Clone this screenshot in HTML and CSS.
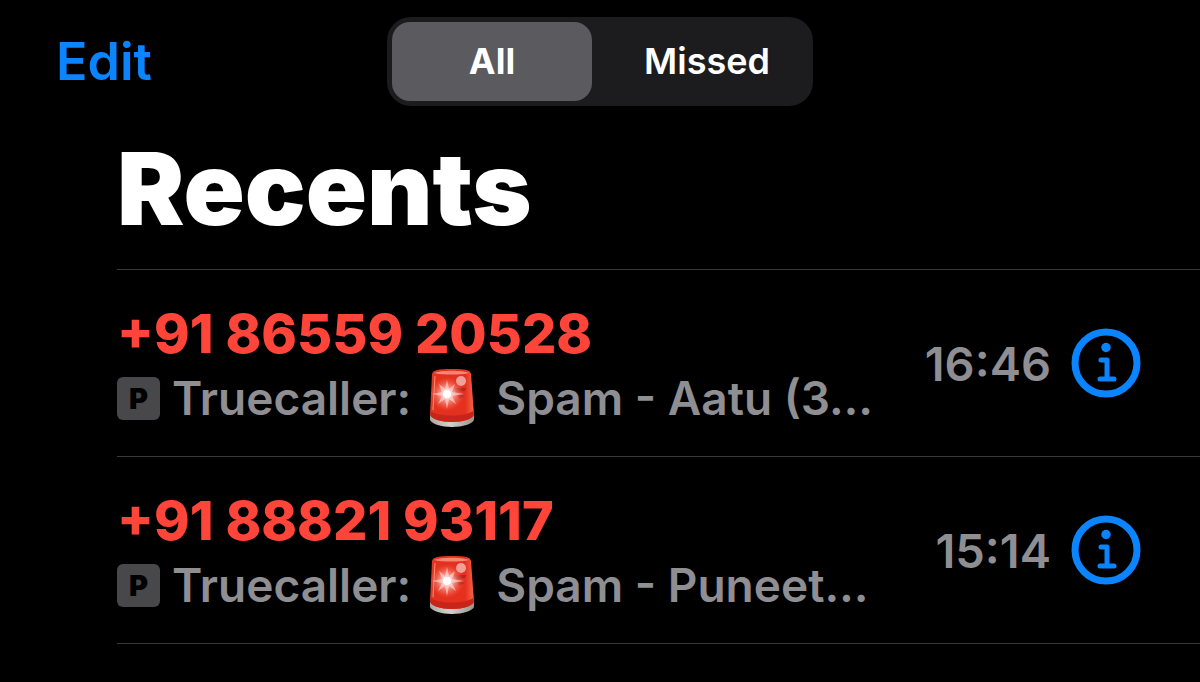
FILE: index.html
```
<!DOCTYPE html>
<html lang="en">

<head>
    <meta charset="utf-8" />
    <meta name="viewport" content="width=device-width, initial-scale=1">
    <title>Recents</title>
    <link rel="stylesheet" href="styles.css">
</head>

<body>
    <!-- shared icons -->
    <svg class="sprite" aria-hidden="true">
        <defs>
            <linearGradient id="glass" x1="0" x2="1" y1="0" y2="0">
                <stop offset="0" stop-color="#d93f2c" />
                <stop offset="0.15" stop-color="#e3301f" />
                <stop offset="0.8" stop-color="#e5301f" />
                <stop offset="1" stop-color="#f4654a" />
            </linearGradient>
            <linearGradient id="base" x1="0" x2="1" y1="0" y2="0">
                <stop offset="0" stop-color="#aaa8a0" />
                <stop offset="0.45" stop-color="#d2d2cc" />
                <stop offset="1" stop-color="#96958e" />
            </linearGradient>
            <radialGradient id="glow">
                <stop offset="0" stop-color="#fff" />
                <stop offset="0.3" stop-color="#ffc4bd" stop-opacity="0.85" />
                <stop offset="1" stop-color="#ff6a50" stop-opacity="0" />
            </radialGradient>
            <symbol id="siren" viewBox="0 0 44 58">
                <path d="M0 46V51C2 55 11 58 22 58S42 55 44 51V46Z" fill="url(#base)" />
                <path d="M2 5C3 1 8 0 22 0S40 1 41 5L44 46C42 50 34 53 22 53S2 50 0 46Z" fill="url(#glass)" />
                <path d="M1 42C8 48 35 48 43 42L44 46C42 50 34 53 22 53S2 50 0 46Z" fill="#c9241a" />
                <path d="M4 4C10 1 33 1 39 4C33 6 10 6 4 4Z" fill="#f98472" />
                <path d="M5 7L3 41" fill="none" stroke="#fa8b70" stroke-width="1" />
                <path d="M24 19L36 19L35 22L27 23L34 27L29 30Z" fill="#b8231b" />
                <circle cx="31" cy="12" r="5" fill="#f1a197" />
                <circle cx="17" cy="25" r="17" fill="url(#glow)" />
                <path d="M17 11L19 20L25 15L22 23L34 25L22 27L26 35L19 30L17 40L15 30L8 35L12 27L2 25L12 23L9 15L15 20Z" fill="#ffe1dd" fill-opacity="0.6" />
                <circle cx="17" cy="25" r="4" fill="#fff" />
            </symbol>
            <symbol id="info" viewBox="0 0 70 70">
                <circle cx="35" cy="35" r="31" fill="none" stroke="#0a84ff" stroke-width="7" />
                <circle cx="35" cy="19.500" r="4.7" fill="#0a84ff" />
                <path d="M30 32H36V51M29 51H43" fill="none" stroke="#0a84ff" stroke-width="5" stroke-linecap="round" stroke-linejoin="round" />
            </symbol>
        </defs>
    </svg>

    <header class="toolbar">
        <button class="edit" type="button">Edit</button>
        <div class="segments">
            <button class="segment active" type="button" aria-pressed="true">All</button>
            <button class="segment" type="button" aria-pressed="false">Missed</button>
        </div>
    </header>

    <main class="recents">
        <h1 class="title">Recents</h1>
        <ul class="calls">
            <li class="call">
                <div class="caller">
                    <div class="number">+91 86559 20528</div>
                    <div class="label">
                        <span class="badge">P</span>
                        <span>Truecaller:</span>
                        <svg class="siren" role="img" aria-label="Siren"><use href="#siren" /></svg>
                        <span>Spam - Aatu (3…</span>
                    </div>
                </div>
                <time class="time">16:46</time>
                <button class="info" type="button" aria-label="Call details"><svg><use href="#info" /></svg></button>
            </li>
            <li class="call">
                <div class="caller">
                    <div class="number">+91 88821 93117</div>
                    <div class="label">
                        <span class="badge">P</span>
                        <span>Truecaller:</span>
                        <svg class="siren" role="img" aria-label="Siren"><use href="#siren" /></svg>
                        <span>Spam - Puneet…</span>
                    </div>
                </div>
                <time class="time">15:14</time>
                <button class="info" type="button" aria-label="Call details"><svg><use href="#info" /></svg></button>
            </li>
        </ul>
    </main>
</body>

</html>
```
FILE: styles.css
```
* {
    box-sizing: border-box;
}

body {
    margin: 0;
    background-color: #000;
    color: #fff;
    font-family: Inter, "Liberation Sans", sans-serif;
}

button {
    padding: 0;
    border: none;
    background: none;
    color: inherit;
    font-family: inherit;
    cursor: pointer;
}

.sprite {
    display: block;
    width: 0;
    height: 0;
}

.toolbar {
    display: grid;
    grid-template-columns: 1fr minmax(auto, 426px) 1fr;
    align-items: center;
    padding: 17px 56px 0;
}

.edit {
    justify-self: start;
    color: #0a84ff;
    font-size: 52px;
    font-weight: 600;
    line-height: 88px;
}

.segments {
    display: grid;
    grid-template-columns: 200px 1fr;
    gap: 14px;
    padding: 5px;
    border-radius: 24px;
    background-color: #1c1c1f;
}

.segment {
    border-radius: 18px;
    font-size: 36px;
    font-weight: 600;
    line-height: 79px;
}

.segment.active {
    background-color: #5b5a5f;
    font-weight: 700;
}

.recents {
    padding-left: 117px;
}

.title {
    margin: 0;
    padding: 22px 0 21px;
    font-size: 101px;
    font-weight: 900;
    line-height: 120px;
}

.calls {
    margin: 0;
    padding: 0;
    list-style: none;
    border-top: 1px solid #38383a;
}

.call {
    display: flex;
    align-items: center;
    padding-right: 59px;
    border-bottom: 1px solid #38383a;
}

.caller {
    flex: 1;
    min-width: 0;
    padding: 32px 0 26px;
}

.number {
    color: #ff453a;
    font-size: 54px;
    font-weight: 800;
    line-height: 64px;
}

.label {
    display: flex;
    align-items: center;
    color: #8e8e93;
    font-size: 46px;
    font-weight: 600;
    line-height: 64px;
    white-space: nowrap;
}

.badge {
    width: 43px;
    margin-right: 12px;
    border-radius: 6px;
    background-color: #48484b;
    color: #000;
    font-size: 29px;
    font-weight: 900;
    line-height: 43px;
    text-align: center;
}

.siren {
    width: 44px;
    height: 58px;
    margin: 0 22px 0 19px;
}

.time {
    color: #8e8e93;
    font-size: 47px;
    font-weight: 600;
}

.info {
    margin-left: 20px;
}

.info svg {
    display: block;
    width: 70px;
    height: 70px;
}
```
